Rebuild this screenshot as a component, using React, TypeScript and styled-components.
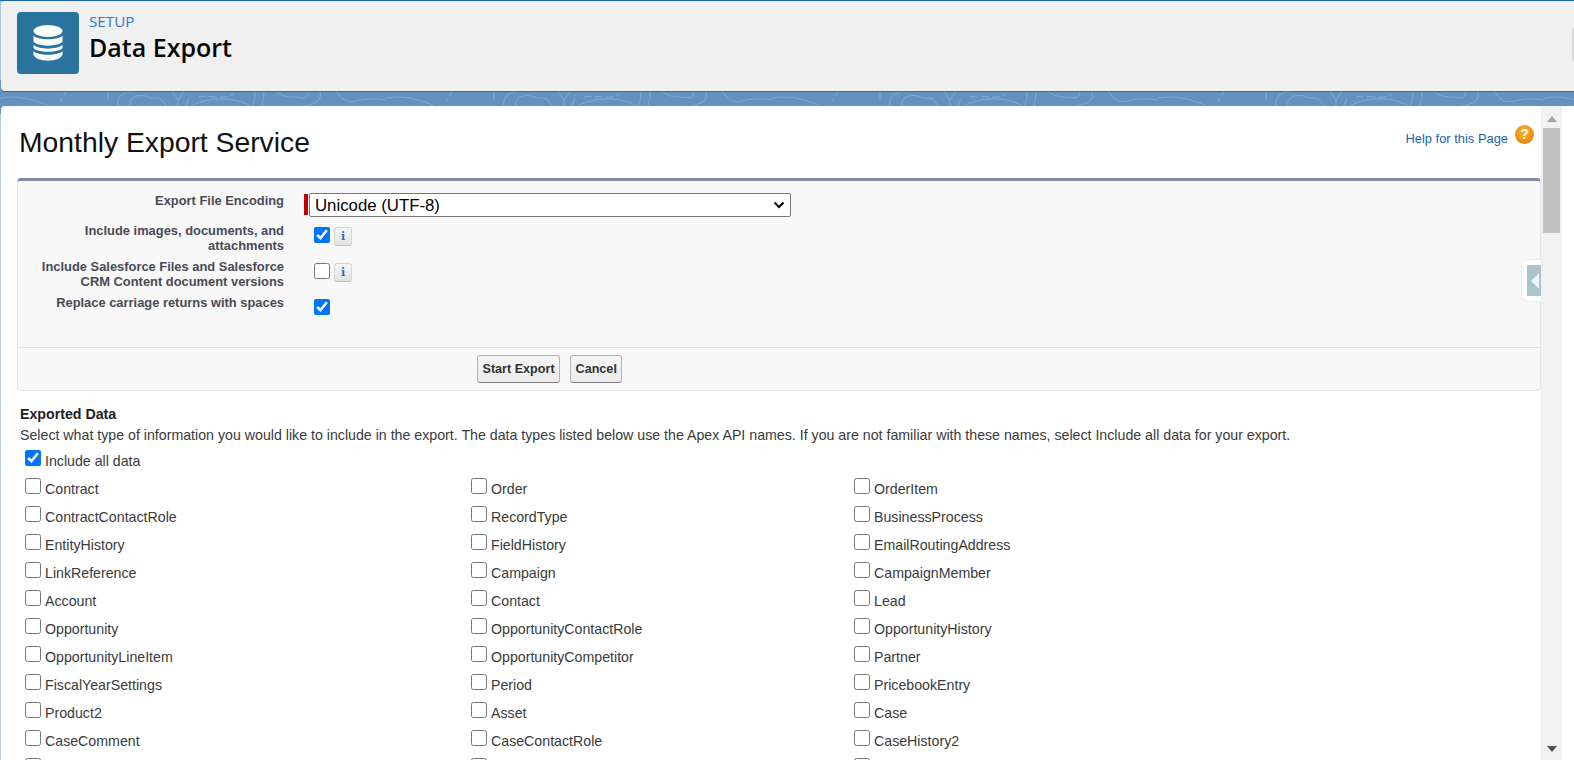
import styled, { createGlobalStyle } from "styled-components";

const GlobalStyle = createGlobalStyle`
  html, body {
    margin: 0;
    padding: 0;
    height: 100%;
    overflow: hidden;
    background: #fff;
    font-family: "Liberation Sans", Arial, sans-serif;
  }
`;

const Page = styled.div`
  width: 1574px;
  height: 760px;
  display: flex;
  flex-direction: column;
  overflow: hidden;
`;

const Masthead = styled.div`
  background: linear-gradient(#1f66ab 0 1px, #b4cce9 1px 80px, #6a95c3 80px);
  padding: 1px 0 0 1px;
  flex: none;
`;

const Header = styled.header`
  position: relative;
  height: 90px;
  box-sizing: border-box;
  padding: 11px 0 0 16px;
  display: flex;
  gap: 10px;
  background: #f0f0f0;
  border-radius: 4px 0 0 4px;
  box-shadow: 0 1px 1px rgba(60, 60, 60, 0.55);
  z-index: 1;
`;

const AppIcon = styled.div`
  width: 62px;
  height: 62px;
  border-radius: 4px;
  background: #2a739e;
  display: flex;
  align-items: center;
  justify-content: center;
`;

const HeaderText = styled.div`
  display: flex;
  flex-direction: column;
  font-family: "Open Sans", "Noto Sans", sans-serif;
`;

const Eyebrow = styled.div`
  font-size: 15.2px;
  line-height: 18px;
  color: #2f78cf;
`;

const HeaderTitle = styled.h1`
  margin: 2px 0 0;
  font-size: 25px;
  line-height: 30px;
  font-weight: 600;
  color: #080707;
`;

const EdgeShadow = styled.div`
  position: absolute;
  right: 0;
  top: 27px;
  width: 2px;
  height: 34px;
  background: #dcdcdc;
  border-radius: 2px 0 0 2px;
`;

const Band = styled.svg`
  display: block;
  flex: none;
  width: 1574px;
  height: 15px;
`;

const ContentRow = styled.div`
  flex: 1;
  min-height: 0;
  display: flex;
  background: linear-gradient(#6a95c3 0 8px, #b4cce9 8px);
  padding-left: 1px;
`;

const Card = styled.main`
  position: relative;
  flex: 1;
  min-width: 0;
  background: #fff;
  border-radius: 4px 0 0 0;
  overflow: hidden;
  padding: 0 0 0 16px;
`;

const Scrollbar = styled.div`
  flex: none;
  width: 21px;
  background: #f1f1f1;
  display: flex;
  flex-direction: column;
  align-items: center;
  padding: 10px 0 8px;
  box-sizing: border-box;
`;

const ArrowUp = styled.div`
  width: 0;
  height: 0;
  border-left: 5px solid transparent;
  border-right: 5px solid transparent;
  border-bottom: 6px solid #a3a3a3;
`;

const ArrowDown = styled.div`
  width: 0;
  height: 0;
  margin-top: auto;
  border-left: 5px solid transparent;
  border-right: 5px solid transparent;
  border-top: 6px solid #505050;
`;

const Thumb = styled.div`
  width: 17px;
  height: 105px;
  margin-top: 6px;
  background: #c1c1c1;
`;

const Gutter = styled.div`
  flex: none;
  width: 12px;
  background: #fff;
`;

const TitleRow = styled.div`
  height: 72px;
  display: flex;
  justify-content: space-between;
  padding: 20px 7px 0 2px;
  box-sizing: border-box;
`;

const PageTitle = styled.h2`
  margin: 0;
  font-size: 28.3px;
  line-height: 32px;
  font-weight: 400;
  color: #111;
`;

const Help = styled.div`
  display: flex;
  gap: 7px;
  margin-top: -1px;
`;

const HelpLink = styled.a`
  font-size: 12.9px;
  line-height: 16px;
  margin-top: 6px;
  color: #1a63ad;
`;

const HelpIcon = styled.div`
  width: 19px;
  height: 19px;
  border-radius: 50%;
  background: radial-gradient(circle at 50% 35%, #f7b531 0, #ea8f0c 65%, #b9700f 100%);
  color: #fff;
  font-size: 14px;
  font-weight: 700;
  line-height: 19px;
  text-align: center;
`;

const FormBlock = styled.section`
  width: 1524px;
  box-sizing: border-box;
  background: #f8f8f8;
  border: 1px solid #e4e6e8;
  border-top: 3px solid #7f8aa3;
  border-radius: 4px;
`;

const FormBody = styled.div`
  padding: 9px 0 15px;
  border-bottom: 1px solid #dddfe1;
`;

const FormRow = styled.div<{ $height: number }>`
  display: flex;
  height: ${(p) => p.$height}px;
`;

const FieldLabel = styled.label<{ $top: number }>`
  width: 266px;
  flex: none;
  margin-top: -1px;
  padding-top: ${(p) => p.$top}px;
  box-sizing: border-box;
  text-align: right;
  font-size: 12.9px;
  line-height: 15px;
  font-weight: 700;
  color: #4a4a56;
`;

const FieldControl = styled.div`
  margin-left: 20px;
  display: flex;
  align-items: flex-start;
`;

const Required = styled.div`
  width: 4px;
  height: 21px;
  margin-top: 4px;
  background: #c00000;
`;

const EncodingSelect = styled.select`
  width: 482px;
  height: 24px;
  margin: 3px 0 0 1px;
  box-sizing: border-box;
  font-family: "Liberation Sans", Arial, sans-serif;
  font-size: 16.8px;
  color: #000;
  border: 1px solid #767676;
  border-radius: 2px;
  padding-left: 5px;
  appearance: none;
  background: #fff
    url("data:image/svg+xml,%3Csvg xmlns='http://www.w3.org/2000/svg' width='12' height='8'%3E%3Cpath d='M1.5 1.5L6 6l4.5-4.5' fill='none' stroke='%23000' stroke-width='2'/%3E%3C/svg%3E")
    no-repeat right 5px center;
`;

const FormCheck = styled.input`
  width: 16px;
  height: 16px;
  margin: 3px 4px 0 10px;
`;

const InfoButton = styled.div`
  width: 18px;
  height: 19px;
  margin-top: 3px;
  box-sizing: border-box;
  border: 1px solid #d4d4d4;
  border-bottom-color: #bdbdbd;
  border-radius: 3px;
  background: linear-gradient(#f6f6f6, #e2e2e2);
  color: #1f72c8;
  font-family: "DejaVu Serif", serif;
  font-size: 11px;
  font-weight: 700;
  line-height: 17px;
  text-align: center;
`;

const ButtonRow = styled.div`
  display: flex;
  justify-content: flex-start;
  gap: 10px;
  padding: 7px 0 7px 459px;
`;

const ActionButton = styled.button`
  height: 28px;
  box-sizing: border-box;
  padding: 0 4.5px;
  border: 1px solid #b5b5b5;
  border-bottom-color: #7f7f7f;
  border-radius: 3px;
  background: linear-gradient(#f5f5f5, #ececec);
  font-family: "Liberation Sans", Arial, sans-serif;
  font-size: 12.6px;
  font-weight: 700;
  color: #333;
`;

const SideTab = styled.div`
  position: absolute;
  right: 0;
  top: 154px;
  width: 14px;
  height: 31px;
  padding: 5px 0 5px 5px;
  background: #fff;
  border-radius: 6px 0 0 6px;
  box-shadow: 0 0 2px rgba(0, 0, 0, 0.15);
  display: flex;
`;

const SideTabFace = styled.div`
  width: 14px;
  height: 31px;
  background: #a8c4cf;
  display: flex;
  align-items: center;
  padding-left: 4px;
  box-sizing: border-box;
`;

const SideTabArrow = styled.div`
  width: 0;
  height: 0;
  border-top: 8px solid transparent;
  border-bottom: 8px solid transparent;
  border-right: 8px solid #eef3f5;
`;

const SectionTitle = styled.h3`
  margin: 16px 0 0 3px;
  font-size: 14.2px;
  line-height: 15px;
  font-weight: 700;
  color: #222;
`;

const SectionHelp = styled.p`
  margin: 6px 0 0 3px;
  font-size: 14.2px;
  line-height: 15px;
  color: #3a3a3a;
`;

const DataGrid = styled.div`
  display: grid;
  grid-template-columns: 446px 383px 1fr;
  grid-auto-rows: 28px;
  margin: 7px 0 0 8px;
`;

const AllDataRow = styled.div`
  grid-column: 1 / -1;
  display: flex;
`;

const DataItem = styled.label`
  display: flex;
  align-items: flex-start;
  font-size: 14.2px;
  line-height: 15px;
  color: #3a3a3a;
`;

const DataCheck = styled.input`
  width: 16px;
  height: 16px;
  margin: 0 4px 0 0;
  flex: none;
`;

const DataText = styled.span`
  padding-top: 4px;
`;

const items = [
  "Contract", "Order", "OrderItem",
  "ContractContactRole", "RecordType", "BusinessProcess",
  "EntityHistory", "FieldHistory", "EmailRoutingAddress",
  "LinkReference", "Campaign", "CampaignMember",
  "Account", "Contact", "Lead",
  "Opportunity", "OpportunityContactRole", "OpportunityHistory",
  "OpportunityLineItem", "OpportunityCompetitor", "Partner",
  "FiscalYearSettings", "Period", "PricebookEntry",
  "Product2", "Asset", "Case",
  "CaseComment", "CaseContactRole", "CaseHistory2",
  "", "", "",
];

function BandPattern() {
  return (
    <Band viewBox="0 0 1574 15">
      <defs>
        <pattern id="swirl" width="386" height="15" patternUnits="userSpaceOnUse">
          <g fill="none" stroke="#84a8ce" strokeWidth="1">
            <path d="M0 7C16 4 34 8 48 15" />
            <path d="M66 0L60 11" strokeDasharray="5 3" />
            <path d="M108 1V9" />
            <path d="M118 15C116 6 124 0 134 0" />
            <path d="M130 15C128 6 140 2 148 6C154 9 160 4 164 12L166 15" />
            <path d="M172 0L178 9V15M184 0L178 9" />
            <path d="M186 15L190 4M198 6C208 3 224 10 234 3" strokeDasharray="8 3" />
            <path d="M192 15C210 5 236 6 250 15" />
            <path d="M254 0C256 6 254 11 252 15M264 0C264 6 263 11 262 15" />
            <path d="M276 0C284 8 294 5 304 7C308 5 308 2 308 0" />
            <path d="M320 0C322 10 316 13 304 15" />
            <path d="M336 0C344 12 350 12 360 9C372 7 380 8 386 9" />
          </g>
        </pattern>
      </defs>
      <rect width="1574" height="15" fill="#6591c1" />
      <rect width="1574" height="15" fill="url(#swirl)" />
    </Band>
  );
}

function DatabaseIcon() {
  return (
    <svg width="30" height="36" viewBox="0 0 30 36" fill="#fff">
      <ellipse cx="15" cy="6" rx="14.5" ry="6" />
      <path d="M.5 10.5C4 15.5 26 15.5 29.5 10.5V16.5C26 22 4 22 .5 16.5Z" />
      <path d="M.5 19.5C4 25 26 25 29.5 19.5V23C26 28 4 28 .5 23Z" />
      <path d="M.5 26C4 31 26 31 29.5 26V30C26 37.5 4 37.5 .5 30Z" />
    </svg>
  );
}

export default function App() {
  return (
    <Page>
      <GlobalStyle />
      <Masthead>
        <Header>
          <AppIcon>
            <DatabaseIcon />
          </AppIcon>
          <HeaderText>
            <Eyebrow>SETUP</Eyebrow>
            <HeaderTitle>Data Export</HeaderTitle>
          </HeaderText>
          <EdgeShadow />
        </Header>
      </Masthead>
      <BandPattern />
      <ContentRow>
        <Card>
          <TitleRow>
            <PageTitle>Monthly Export Service</PageTitle>
            <Help>
              <HelpLink>Help for this Page</HelpLink>
              <HelpIcon>?</HelpIcon>
            </Help>
          </TitleRow>
          <FormBlock>
            <FormBody>
              <FormRow $height={34}>
                <FieldLabel $top={4}>Export File Encoding</FieldLabel>
                <FieldControl>
                  <Required />
                  <EncodingSelect defaultValue="utf8">
                    <option value="utf8">Unicode (UTF-8)</option>
                  </EncodingSelect>
                </FieldControl>
              </FormRow>
              <FormRow $height={36}>
                <FieldLabel $top={0}>
                  Include images, documents, and
                  <br />
                  attachments
                </FieldLabel>
                <FieldControl>
                  <FormCheck type="checkbox" defaultChecked />
                  <InfoButton>i</InfoButton>
                </FieldControl>
              </FormRow>
              <FormRow $height={36}>
                <FieldLabel $top={0}>
                  Include Salesforce Files and Salesforce
                  <br />
                  CRM Content document versions
                </FieldLabel>
                <FieldControl>
                  <FormCheck type="checkbox" />
                  <InfoButton>i</InfoButton>
                </FieldControl>
              </FormRow>
              <FormRow $height={36}>
                <FieldLabel $top={0}>Replace carriage returns with spaces</FieldLabel>
                <FieldControl>
                  <FormCheck type="checkbox" defaultChecked />
                </FieldControl>
              </FormRow>
            </FormBody>
            <ButtonRow>
              <ActionButton>Start Export</ActionButton>
              <ActionButton>Cancel</ActionButton>
            </ButtonRow>
          </FormBlock>
          <SectionTitle>Exported Data</SectionTitle>
          <SectionHelp>
            Select what type of information you would like to include in the export. The data types listed below use the Apex API names. If you are not familiar with these names, select Include all data for your export.
          </SectionHelp>
          <DataGrid>
            <AllDataRow>
              <DataItem>
                <DataCheck type="checkbox" defaultChecked />
                <DataText>Include all data</DataText>
              </DataItem>
            </AllDataRow>
            {items.map((name, i) => (
              <DataItem key={i}>
                <DataCheck type="checkbox" />
                <DataText>{name}</DataText>
              </DataItem>
            ))}
          </DataGrid>
          <SideTab>
            <SideTabFace>
              <SideTabArrow />
            </SideTabFace>
          </SideTab>
        </Card>
        <Scrollbar>
          <ArrowUp />
          <Thumb />
          <ArrowDown />
        </Scrollbar>
        <Gutter />
      </ContentRow>
    </Page>
  );
}
